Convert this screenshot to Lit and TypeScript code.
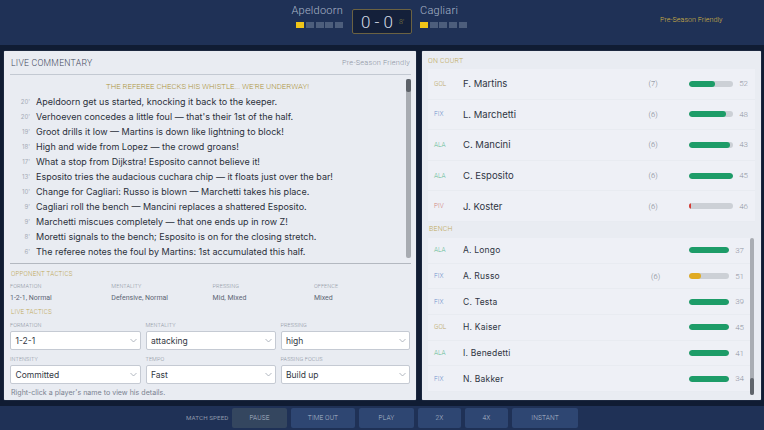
import { LitElement, html, css } from "lit";
import { customElement } from "lit/decorators.js";

const log: [string, string][] = [
  ["20'", "Apeldoorn get us started, knocking it back to the keeper."],
  ["20'", "Verhoeven concedes a little foul — that's their 1st of the half."],
  ["19'", "Groot drills it low — Martins is down like lightning to block!"],
  ["18'", "High and wide from Lopez — the crowd groans!"],
  ["17'", "What a stop from Dijkstra! Esposito cannot believe it!"],
  ["13'", "Esposito tries the audacious cuchara chip — it floats just over the bar!"],
  ["10'", "Change for Cagliari: Russo is blown — Marchetti takes his place."],
  ["9'", "Cagliari roll the bench — Mancini replaces a shattered Esposito."],
  ["9'", "Marchetti miscues completely — that one ends up in row Z!"],
  ["8'", "Moretti signals to the bench; Esposito is on for the closing stretch."],
  ["6'", "The referee notes the foul by Martins: 1st accumulated this half."],
];
type P = [string, string, string, number, string, number];
const court: P[] = [
  ["GOL", "F. Martins", "(7)", 60, "g", 52],
  ["FIX", "L. Marchetti", "(6)", 85, "g", 48],
  ["ALA", "C. Mancini", "(6)", 93, "g", 43],
  ["ALA", "C. Esposito", "(6)", 100, "g", 45],
  ["PIV", "J. Koster", "(6)", 6, "r", 46],
];
const bench: P[] = [
  ["ALA", "A. Longo", "", 100, "g", 37],
  ["FIX", "A. Russo", "(6)", 30, "y", 51],
  ["FIX", "C. Testa", "", 100, "g", 39],
  ["GOL", "H. Kaiser", "", 100, "g", 45],
  ["ALA", "I. Benedetti", "", 100, "g", 41],
  ["FIX", "N. Bakker", "", 100, "g", 34],
];
const opp = [["FORMATION", "1-2-1, Normal"], ["MENTALITY", "Defensive, Normal"], ["PRESSING", "Mid, Mixed"], ["OFFENCE", "Mixed"]];
const live = [["FORMATION", "1-2-1"], ["MENTALITY", "attacking"], ["PRESSING", "high"], ["INTENSITY", "Committed"], ["TEMPO", "Fast"], ["PASSING FOCUS", "Build up"]];
const speeds = [["PAUSE", "on w55"], ["TIME OUT", "w64"], ["PLAY", "w55"], ["2X", "w43"], ["4X", "w43"], ["INSTANT", "w66"]];

@customElement("app-root")
export class AppRoot extends LitElement {
  static styles = css`
    :host { display: flex; flex-direction: column; width: 764px; height: 430px; overflow: hidden; background: #101c33; font-family: Inter, sans-serif; color: #2a3140; }
    .head { height: 45px; flex: none; background: #1f3156; display: flex; align-items: flex-start; box-sizing: border-box; padding-top: 3px; padding-left: 293px; position: relative; font-family: Roboto, sans-serif; }
    .side { width: 50px; display: flex; flex-direction: column; align-items: flex-end; flex: none; }
    .side.away { align-items: flex-start; }
    .team { color: #aab6c9; font-size: 11px; font-weight: 300; letter-spacing: .25px; line-height: 15px; white-space: nowrap; }
    .pips { display: flex; gap: 1.7px; margin-top: 4px; }
    .pip { width: 8px; height: 6px; background: #4d5e7c; }
    .pip.on { background: #f0c518; }
    .score { width: 60px; height: 25px; margin: 6px 8px 0 9px; box-sizing: border-box; border: 1px solid #6b6242; border-radius: 2px; background: #14203a; color: #d5dbe5; display: flex; align-items: center; padding-left: 8px; font-size: 17px; font-weight: 300; gap: 5px; flex: none; }
    .min { font-size: 7px; color: #87803f; margin-left: 1px; }
    .comp { position: absolute; left: 660px; top: 15px; font-size: 7.2px; color: #d6b544; font-weight: 300; }
    .main { flex: 1; display: flex; gap: 6px; padding: 6px 3px 6px 4px; min-height: 0; }
    .panel { background: #e9ecf2; border-radius: 1px; box-sizing: border-box; box-shadow: 0 0 1px #8f9bb0; }
    .left { width: 412px; padding: 0 5px 0 6px; display: flex; flex-direction: column; }
    .ptitle { display: flex; justify-content: space-between; align-items: center; height: 23px; border-bottom: 1px solid #c3c9d2; font-family: Roboto, sans-serif; font-weight: 300; flex: none; padding: 0 1px; }
    .ptitle b { font-weight: 300; font-size: 8.7px; color: #3f495c; letter-spacing: .25px; }
    .ptitle span { font-size: 7.4px; color: #8d95a3; letter-spacing: .2px; }
    .log { position: relative; height: 188px; flex: none; border-bottom: 1.5px solid #b3b8c0; overflow: hidden; }
    .whistle { text-align: center; font-family: Roboto, sans-serif; font-size: 7.8px; color: #ad9540; line-height: 14px; padding-top: 5px; padding-right: 6px; font-weight: 300; }
    .line { display: flex; height: 15px; align-items: center; font-size: 9px; color: #2b303b; }
    .m { width: 20px; text-align: right; margin-right: 6px; font-size: 6px; color: #a5abb5; flex: none; }
    .sb { position: absolute; right: 0; top: 4px; bottom: 5px; width: 5px; background: #a7abb1; border-radius: 2px; }
    .sb i { display: block; height: 13px; background: #5c6168; border-radius: 2px; }
    .sect { font-family: Roboto, sans-serif; font-size: 6.3px; color: #bfa95a; letter-spacing: .2px; line-height: 9px; font-weight: 300; padding-left: 1px; }
    .sect.top { margin-top: 6px; }
    .sect.live { margin-top: 5px; }
    .sect.bn { margin-top: 3px; font-size: 7px; }
    .opp { display: grid; grid-template-columns: repeat(4, 101.3px); margin-top: 4px; }
    .lab { font-family: Roboto, sans-serif; font-size: 5.5px; line-height: 7px; color: #8e96a3; font-weight: 300; letter-spacing: .1px; }
    .val { font-size: 7px; color: #5d6675; line-height: 10px; margin-top: 3px; font-family: Roboto, sans-serif; }
    .grid { display: grid; grid-template-columns: 131px 130.5px 129px; column-gap: 4.500px; row-gap: 6px; margin-top: 5px; }
    .sel { margin-top: 2px; height: 19px; box-sizing: border-box; border: 1px solid #c5cad3; border-radius: 2px; background: #fff; display: flex; align-items: center; justify-content: space-between; padding: 0 3px 0 4.500px; font-size: 8.5px; color: #333844; }
    .sel svg { width: 7px; height: 5px; }
    .note { font-size: 7.1px; color: #7a8290; margin-top: 4px; line-height: 9px; padding-left: 1px; }
    .right { width: 339px; display: flex; flex-direction: column; padding: 0 6px; position: relative; }
    .rsect { font-size: 7px; padding: 6px 0 0; height: 12px; box-sizing: content-box; flex: none; line-height: 9px; }
    .row { display: flex; align-items: center; padding: 0 7px 0 6px; border-bottom: 1px solid #e8ebf1; box-sizing: border-box; height: 30.6px; background: #eef0f6; }
    .pos { width: 29px; font-size: 6.5px; font-family: Roboto, sans-serif; font-weight: 300; flex: none; }
    .GOL { color: #bba868; } .FIX { color: #6f92cc; } .ALA { color: #5fbb95; } .PIV { color: #cf7e78; }
    .name { flex: 1; font-size: 9.5px; color: #2f3543; }
    .fit { font-size: 7.5px; color: #737b88; margin-right: 31px; font-family: Roboto, sans-serif; font-weight: 300; }
    .bar { width: 44.5px; height: 6px; border-radius: 3px; background: #ccd0d6; overflow: hidden; flex: none; }
    .bar i { display: block; height: 100%; border-radius: 3px; }
    .g { background: #1d9c68; } .y { background: #e0aa22; } .r { background: #d63a34; }
    .num { font-size: 8px; color: #8e95a2; margin-left: 6px; font-family: Roboto, sans-serif; font-weight: 300; }
    .list { flex: none; }
    .benchlist { margin-top: 4px; padding-right: 4px; }
    .benchlist .row { height: 25.7px; }
    .benchlist .name { font-size: 8.5px; letter-spacing: .2px; }
    .benchlist .bar { width: 40px; }
    .benchlist .fit { margin-right: 29px; }
    .sb2 { position: absolute; right: 7px; top: 187px; bottom: 5px; width: 4px; border-radius: 2px; background: #a9adb3; }
    .sb2 i { position: absolute; left: 0; right: 0; bottom: 0; height: 17px; background: #5f646b; border-radius: 2px; }
    .foot { height: 24px; flex: none; background: #1f3156; display: flex; align-items: center; padding-left: 186px; gap: 4px; font-family: Roboto, sans-serif; }
    .foot .ms { font-size: 6.2px; color: #8f99aa; width: 42px; letter-spacing: .1px; white-space: nowrap; }
    .btn { height: 20px; box-sizing: border-box; background: #2e4672; border-radius: 2px; color: #b2bccb; font-size: 6.6px; display: flex; align-items: center; justify-content: center; letter-spacing: .1px; font-weight: 300; }
    .btn.on { background: #34465f; }
    .w55 { width: 55px; } .w64 { width: 64px; } .w43 { width: 43px; } .w66 { width: 66px; }
  `;

  private row(p: P) {
    return html`<div class="row">
      <span class="pos ${p[0]}">${p[0]}</span>
      <span class="name">${p[1]}</span>
      <span class="fit">${p[2]}</span>
      <span class="bar"><i class="${p[4]}" style="width:${p[3]}%"></i></span>
      <span class="num">${p[5]}</span>
    </div>`;
  }

  render() {
    return html`
      <div class="head">
        <div class="side">
          <div class="team">Apeldoorn</div>
          <div class="pips"><i class="pip on"></i><i class="pip"></i><i class="pip"></i><i class="pip"></i><i class="pip"></i></div>
        </div>
        <div class="score"><span>0 - 0</span><span class="min">8'</span></div>
        <div class="side away">
          <div class="team">Cagliari</div>
          <div class="pips"><i class="pip on"></i><i class="pip"></i><i class="pip"></i><i class="pip"></i><i class="pip"></i></div>
        </div>
        <div class="comp">Pre-Season Friendly</div>
      </div>
      <div class="main">
        <section class="panel left">
          <div class="ptitle"><b>LIVE COMMENTARY</b><span>Pre-Season Friendly</span></div>
          <div class="log">
            <div class="whistle">THE REFEREE CHECKS HIS WHISTLE... WE'RE UNDERWAY!</div>
            ${log.map(([m, t]) => html`<div class="line"><span class="m">${m}</span><span>${t}</span></div>`)}
            <div class="sb"><i></i></div>
          </div>
          <div class="sect top">OPPONENT TACTICS</div>
          <div class="opp">${opp.map(([l, v]) => html`<div><div class="lab">${l}</div><div class="val">${v}</div></div>`)}</div>
          <div class="sect live">LIVE TACTICS</div>
          <div class="grid">${live.map(([l, v]) => html`<div><div class="lab">${l}</div><div class="sel"><span>${v}</span>
            <svg viewBox="0 0 7 5"><path d="M.5 1 3.5 4 6.500 1" fill="none" stroke="#a0a6b1" stroke-width=".8"/></svg></div></div>`)}</div>
          <div class="note">Right-click a player's name to view his details.</div>
        </section>
        <section class="panel right">
          <div class="sect rsect">ON COURT</div>
          <div class="list">${court.map((p) => this.row(p))}</div>
          <div class="sect bn">BENCH</div>
          <div class="benchlist">${bench.map((p) => this.row(p))}</div>
          <div class="sb2"><i></i></div>
        </section>
      </div>
      <div class="foot">
        <span class="ms">MATCH SPEED</span>
        ${speeds.map(([t, c]) => html`<div class="btn ${c}">${t}</div>`)}
      </div>
    `;
  }
}
